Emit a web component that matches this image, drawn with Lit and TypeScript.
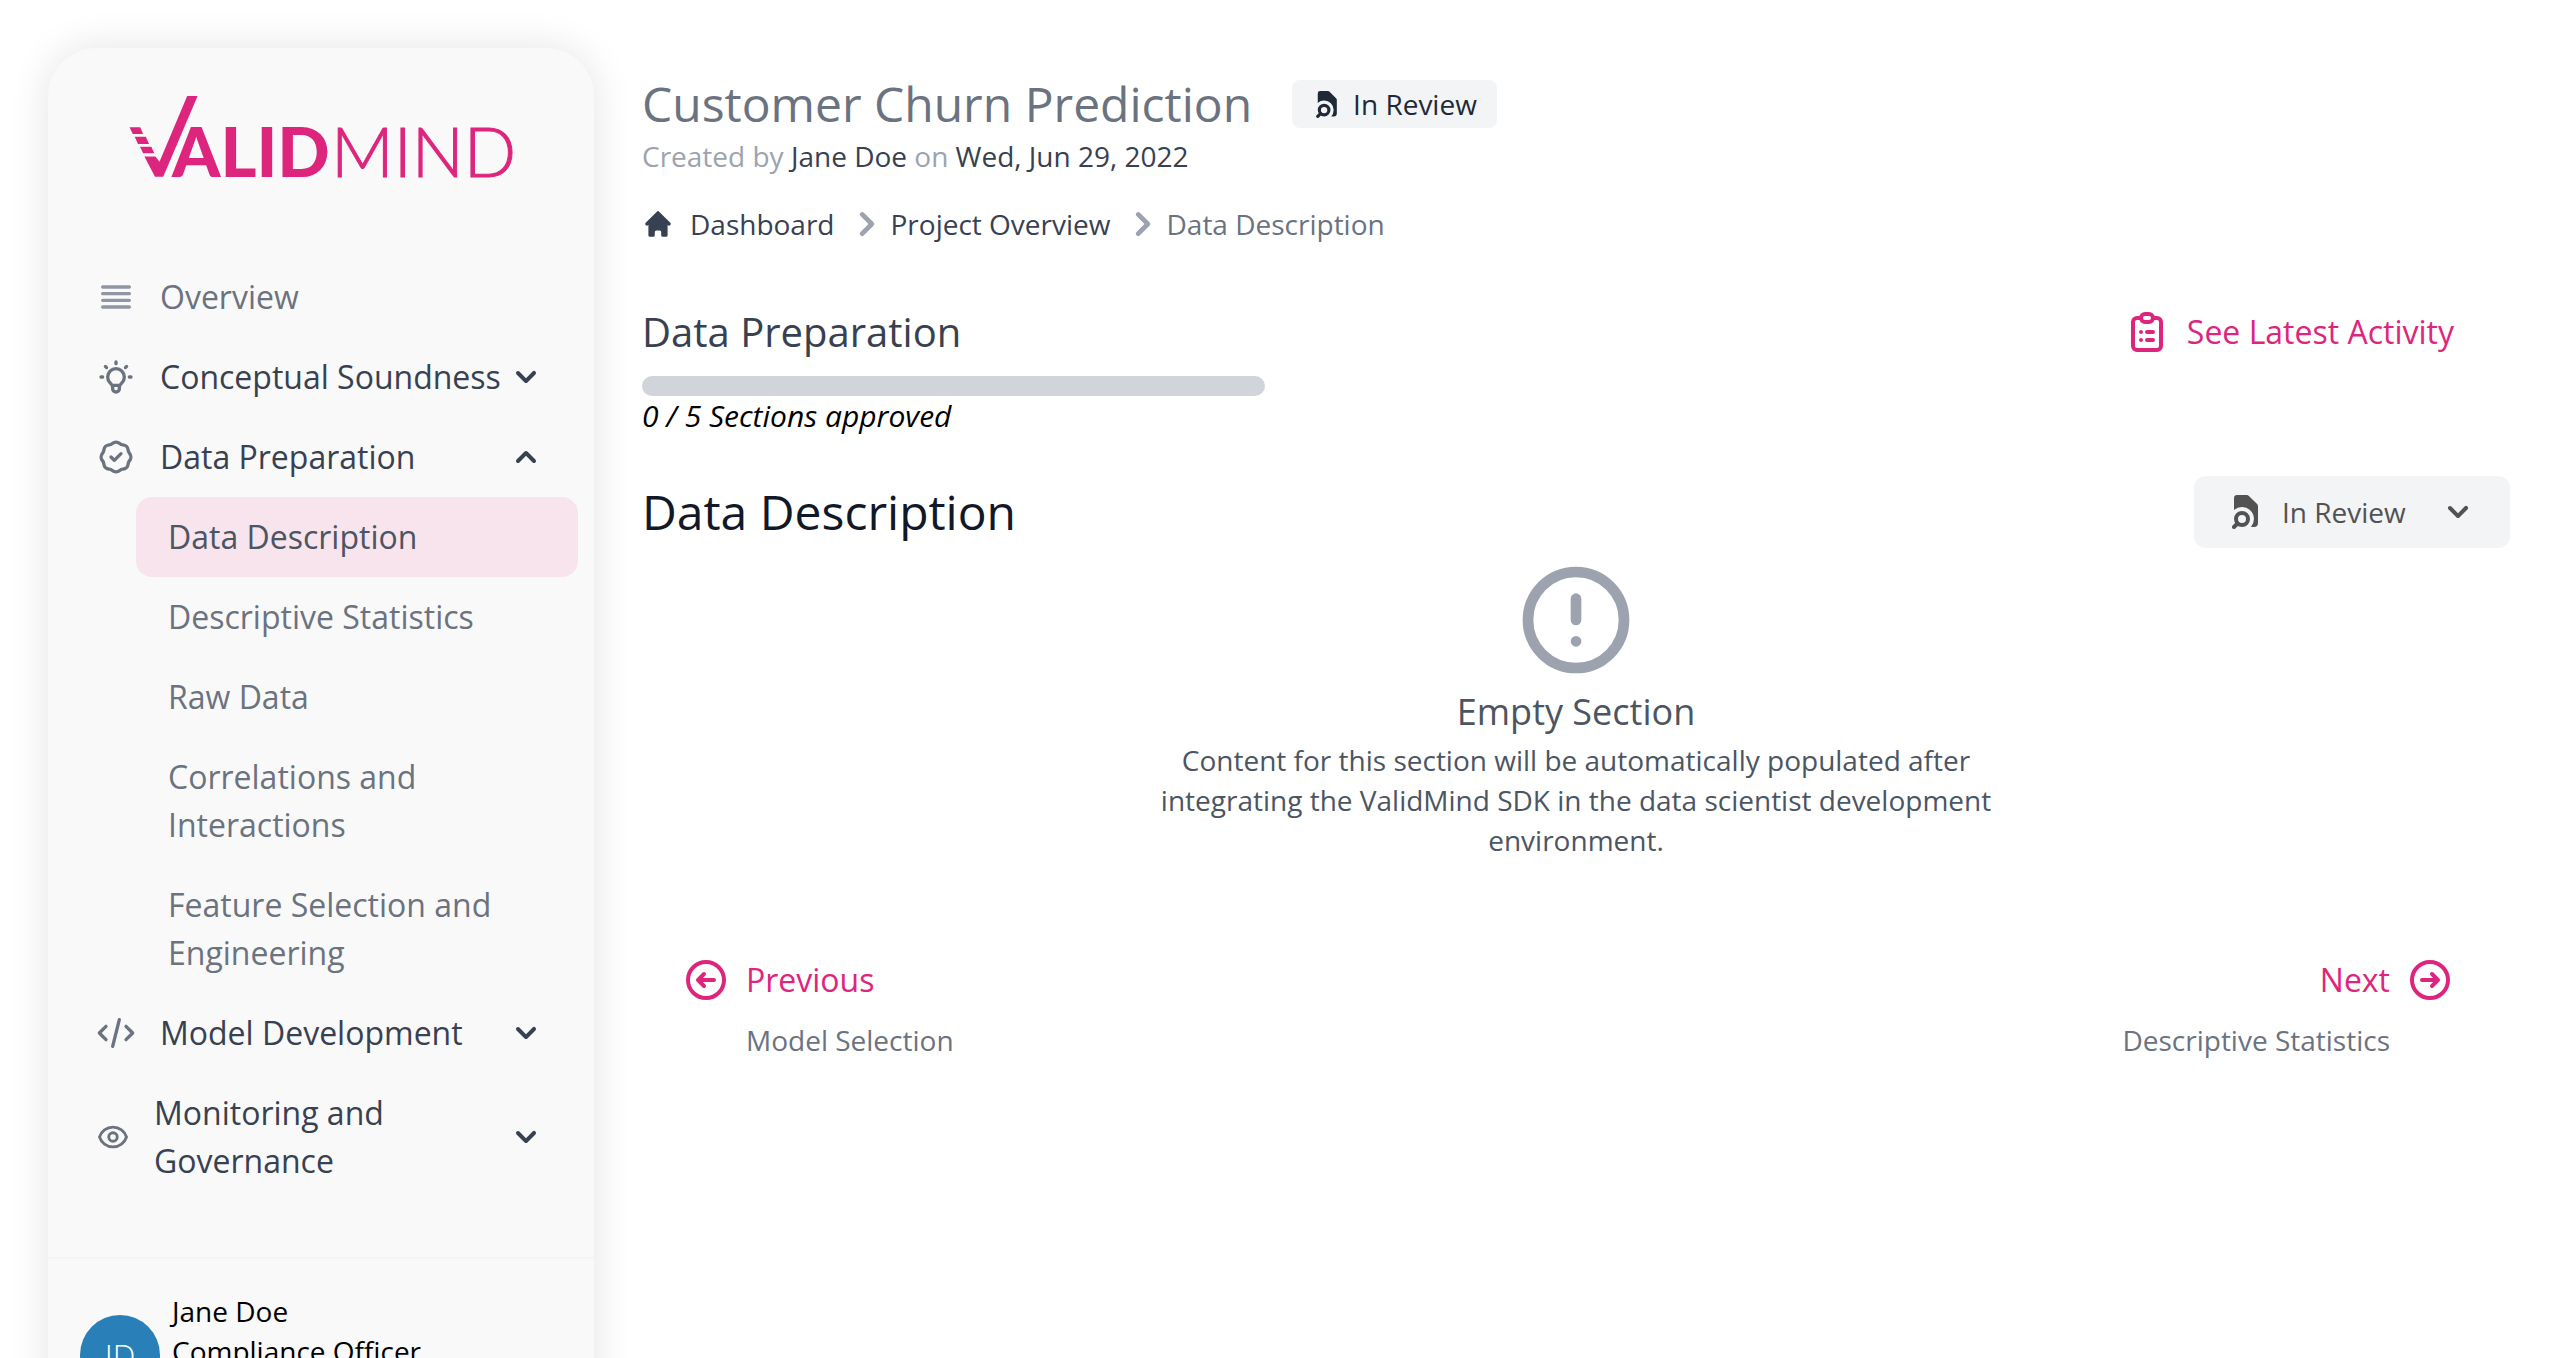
import { LitElement, html, css, svg } from "lit";
import { customElement, property } from "lit/decorators.js";
import { classMap } from "lit/directives/class-map.js";

const CHEVRON_DOWN =
  "M5.293 7.293a1 1 0 011.414 0L10 10.586l3.293-3.293a1 1 0 111.414 1.414l-4 4a1 1 0 01-1.414 0l-4-4a1 1 0 010-1.414z";
const CHEVRON_UP =
  "M14.707 12.707a1 1 0 01-1.414 0L10 9.414l-3.293 3.293a1 1 0 01-1.414-1.414l4-4a1 1 0 011.414 0l4 4a1 1 0 010 1.414z";
const CHEVRON_RIGHT =
  "M7.293 14.707a1 1 0 010-1.414L10.586 10 7.293 6.707a1 1 0 011.414-1.414l4 4a1 1 0 010 1.414l-4 4a1 1 0 01-1.414 0z";
const HOME =
  "M10.707 2.293a1 1 0 00-1.414 0l-7 7a1 1 0 001.414 1.414L4 10.414V17a1 1 0 001 1h2a1 1 0 001-1v-2a1 1 0 011-1h2a1 1 0 011 1v2a1 1 0 001 1h2a1 1 0 001-1v-6.586l.293.293a1 1 0 001.414-1.414l-7-7z";

const OUTLINE: Record<string, string> = {
  list: "M4 6h16M4 10h16M4 14h16M4 18h16",
  bulb: "M9.663 17h4.673M12 3v1m6.364 1.636l-.707.707M21 12h-1M4 12H3m3.343-5.657l-.707-.707m2.828 9.9a5 5 0 117.072 0l-.548.547A3.374 3.374 0 0014 18.469V19a2 2 0 11-4 0v-.531c0-.895-.356-1.754-.988-2.386l-.548-.547z",
  badge:
    "M9 12l2 2 4-4M7.835 4.697a3.42 3.42 0 001.946-.806 3.42 3.42 0 014.438 0 3.42 3.42 0 001.946.806 3.42 3.42 0 013.138 3.138 3.42 3.42 0 00.806 1.946 3.42 3.42 0 010 4.438 3.42 3.42 0 00-.806 1.946 3.42 3.42 0 01-3.138 3.138 3.42 3.42 0 00-1.946.806 3.42 3.42 0 01-4.438 0 3.42 3.42 0 00-1.946-.806 3.42 3.42 0 01-3.138-3.138 3.42 3.42 0 00-.806-1.946 3.42 3.42 0 010-4.438 3.42 3.42 0 00.806-1.946 3.42 3.42 0 013.138-3.138z",
  code: "M10 20l4-16m4 4l4 4-4 4M6 16l-4-4 4-4",
  eye: "M15 12a3 3 0 11-6 0 3 3 0 016 0zM2.458 12C3.732 7.943 7.523 5 12 5c4.478 0 8.268 2.943 9.542 7-1.274 4.057-5.064 7-9.542 7-4.477 0-8.268-2.943-9.542-7z",
  clipboard:
    "M9 5H7a2 2 0 00-2 2v12a2 2 0 002 2h10a2 2 0 002-2V7a2 2 0 00-2-2h-2M9 5a2 2 0 002 2h2a2 2 0 002-2M9 5a2 2 0 012-2h2a2 2 0 012 2m-3 7h3m-3 4h3m-6-4h.01M9 16h.01",
  alert: "M12 8v4m0 4h.01M21 12a9 9 0 11-18 0 9 9 0 0118 0z",
  left: "M11 15l-3-3m0 0l3-3m-3 3h8M3 12a9 9 0 1118 0 9 9 0 01-18 0z",
  right: "M13 9l3 3m0 0l-3 3m3-3H8m13 0a9 9 0 11-18 0 9 9 0 0118 0z",
};

const outline = (name: string, cls: string) => html`
  <svg class=${cls} viewBox="0 0 24 24" fill="none" stroke="currentColor" stroke-width="2"
    stroke-linecap="round" stroke-linejoin="round" aria-hidden="true">
    ${svg`<path d=${OUTLINE[name]}></path>`}
  </svg>`;

const solid = (d: string, cls: string) => html`
  <svg class=${cls} viewBox="0 0 20 20" fill="currentColor" aria-hidden="true">
    ${svg`<path fill-rule="evenodd" clip-rule="evenodd" d=${d}></path>`}
  </svg>`;

const fileSearch = (cls: string) => html`
  <svg class=${cls} viewBox="0 0 26 34" fill="none" aria-hidden="true">
    <path fill="currentColor"
      d="M2 15.06V3a3 3 0 0 1 3-3H14.8a3 3 0 0 1 2.1.9L25.1 9.100a3 3 0 0 1 .9 2.1V28a4 4 0 0 1-4 4H18.940A12 12 0 0 0 2 15.060z"></path>
    <circle cx="10" cy="24" r="6" stroke="currentColor" stroke-width="4"></circle>
    <path d="M5.500 28.500L2 32" stroke="currentColor" stroke-width="4" stroke-linecap="round"></path>
  </svg>`;

interface NavEntry {
  label: string;
  icon: string;
  children?: string[];
  group?: boolean;
}

const NAV: NavEntry[] = [
  { label: "Overview", icon: "list" },
  { label: "Conceptual Soundness", icon: "bulb", group: true },
  {
    label: "Data Preparation",
    icon: "badge",
    group: true,
    children: [
      "Data Description",
      "Descriptive Statistics",
      "Raw Data",
      "Correlations and Interactions",
      "Feature Selection and Engineering",
    ],
  },
  { label: "Model Development", icon: "code", group: true },
  { label: "Monitoring and Governance", icon: "eye", group: true },
];

@customElement("side-bar")
export class SideBar extends LitElement {
  @property() active = "Data Description";

  static styles = css`
    :host {
      display: flex;
      flex-direction: column;
      box-sizing: border-box;
      background: #f9f9f9;
      border-radius: 48px;
      box-shadow: 0 0 40px rgba(0, 0, 0, 0.11);
      font-size: 32px;
      line-height: 48px;
    }
    .brand {
      display: flex;
      justify-content: center;
      padding: 48px 0 80px;
    }
    .logo {
      width: 385px;
      height: 81px;
      overflow: visible;
      color: #de257e;
      fill: currentColor;
      font-family: Lato, "Open Sans", sans-serif;
      font-size: 69px;
    }
    .heavy {
      font-weight: 900;
    }
    .thin {
      font-weight: 300;
      stroke: currentColor;
      stroke-width: 1px;
    }
    ul {
      list-style: none;
      margin: 0;
      padding: 0;
    }
    .nav {
      padding-bottom: 56px;
    }
    .item {
      display: flex;
      align-items: center;
      box-sizing: border-box;
      width: 100%;
      padding: 16px 48px;
      gap: 24px;
      border: 0;
      background: none;
      font: inherit;
      text-align: left;
      text-decoration: none;
      color: #6b7280;
      cursor: pointer;
    }
    .label {
      flex: 1;
    }
    .group .label,
    .chevron {
      color: #374151;
    }
    .icon {
      flex: none;
      width: 40px;
      height: 40px;
      color: #6b7280;
    }
    .icon.light {
      color: #9095a3;
    }
    .icon.small {
      width: 34px;
      height: 34px;
    }
    .chevron {
      flex: none;
      width: 40px;
      height: 40px;
      margin-left: -24px;
    }
    .sub {
      padding: 0 16px 0 88px;
    }
    .link {
      display: block;
      padding: 16px 32px;
      border-radius: 16px;
      color: #6b7280;
      text-decoration: none;
    }
    .link.active {
      background: #f7e4ec;
      color: #4b5563;
    }
    .user {
      display: flex;
      align-items: center;
      gap: 12px;
      padding: 32px;
      border-top: 2px solid #f3f4f6;
      font-size: 28px;
      line-height: 40px;
      color: #000;
    }
    .avatar {
      display: flex;
      align-items: center;
      justify-content: center;
      width: 80px;
      height: 80px;
      border-radius: 50%;
      background: #2980b9;
      color: #fff;
      font-size: 32px;
      font-weight: 300;
    }
    .who {
      min-height: 128px;
    }
  `;

  private renderEntry(entry: NavEntry) {
    const open = !!entry.children;
    const iconClass = entry.icon === "list" ? "icon light" : entry.icon === "eye" ? "icon small" : "icon";
    if (!entry.group) {
      return html`<li>
        <a class="item" href="#overview">${outline(entry.icon, iconClass)}<span class="label">${entry.label}</span></a>
      </li>`;
    }
    return html`<li>
      <button class="item group" type="button" aria-expanded=${open ? "true" : "false"}>
        ${outline(entry.icon, iconClass)}
        <span class="label">${entry.label}</span>
        ${solid(open ? CHEVRON_UP : CHEVRON_DOWN, "chevron")}
      </button>
      ${open
        ? html`<ul class="sub">
            ${entry.children!.map(
              (child) => html`<li>
                <a class=${classMap({ link: true, active: child === this.active })} href="#section">${child}</a>
              </li>`
            )}
          </ul>`
        : null}
    </li>`;
  }

  render() {
    return html`
      <div class="brand">
        <svg class="logo" viewBox="0 0 385 81" role="img" aria-label="ValidMind">
          <path
            d="M58.200 0H68.600L34.200 80.700H26L15.400 60.500H26.400L30.500 65.700ZM.5 31.300H11.200L14.200 38H3.800ZM5.700 40.700H16.800L20.100 48H9ZM10.900 50.700H22.300L25.300 57.300H14.200Z"
          ></path>
          <text class="heavy" x="43" y="81">ALID</text>
          <text class="thin" x="202" y="81">MIND</text>
        </svg>
      </div>
      <nav class="nav" aria-label="Project">
        <ul>
          ${NAV.map((entry) => this.renderEntry(entry))}
        </ul>
      </nav>
      <div class="user">
        <div class="avatar" aria-hidden="true">JD</div>
        <div class="who">
          <div>Jane Doe</div>
          <div>Compliance Officer</div>
        </div>
      </div>
    `;
  }
}

@customElement("app-root")
export class AppRoot extends LitElement {
  static styles = css`
    :host {
      display: grid;
      grid-template-columns: 546px minmax(0, 1fr);
      align-items: start;
      box-sizing: border-box;
      height: 100vh;
      overflow: hidden;
      padding: 48px 48px 0;
      gap: 48px;
      background: #fff;
      font-family: "Open Sans", "Noto Sans", sans-serif;
      font-size: 28px;
      line-height: 40px;
      color: #000;
    }
    h1,
    h2,
    h3,
    p,
    ol {
      margin: 0;
      padding: 0;
      font-weight: 400;
    }
    a {
      color: inherit;
      text-decoration: none;
    }
    main {
      padding-top: 24px;
    }
    .row {
      display: flex;
      align-items: center;
      justify-content: space-between;
    }
    .titlebar {
      display: flex;
      align-items: center;
      gap: 40px;
    }
    h1 {
      font-size: 48px;
      line-height: 64px;
      color: #6b7280;
    }
    .badge {
      display: flex;
      align-items: center;
      gap: 16px;
      height: 48px;
      padding: 0 20px 0 24px;
      border-radius: 8px;
      background: #f3f4f6;
      color: #1f2937;
    }
    .badge-icon {
      width: 21px;
      height: 27px;
    }
    .created {
      color: #9ca3af;
    }
    .strong {
      color: #374151;
    }
    .crumbs {
      display: flex;
      align-items: center;
      list-style: none;
      margin-top: 24px;
      color: #374151;
    }
    .crumbs li {
      display: flex;
      align-items: center;
    }
    .home {
      width: 32px;
      height: 32px;
      margin-right: 16px;
    }
    .sep {
      width: 48px;
      height: 48px;
      margin-left: 8px;
      color: #9ca3af;
    }
    .current {
      color: #6b7280;
    }
    .area {
      margin-top: 56px;
    }
    h2 {
      font-size: 40px;
      line-height: 56px;
      color: #374151;
    }
    .action {
      display: flex;
      align-items: center;
      gap: 16px;
      font-size: 32px;
      line-height: 48px;
      color: #de257e;
    }
    .area .action {
      padding-right: 56px;
    }
    .action-icon {
      width: 48px;
      height: 48px;
    }
    .bar {
      width: calc(100% / 3);
      height: 20px;
      margin-top: 16px;
      border-radius: 10px;
      background: #d1d5db;
    }
    .approved {
      font-size: 30px;
      font-style: italic;
    }
    .section {
      margin-top: 40px;
    }
    h3.heading {
      font-size: 48px;
      line-height: 64px;
      color: #111827;
    }
    .status {
      display: flex;
      align-items: center;
      height: 72px;
      padding: 0 32px 0 38px;
      border-radius: 12px;
      background: #f3f4f6;
      color: #525252;
    }
    .status-icon {
      width: 26px;
      height: 34px;
      margin-right: 24px;
    }
    .status select {
      appearance: none;
      border: 0;
      margin: 0;
      padding: 0;
      background: none;
      font: inherit;
      color: inherit;
    }
    .status-chevron {
      width: 40px;
      height: 40px;
      margin-left: 32px;
      pointer-events: none;
    }
    .empty {
      display: flex;
      flex-direction: column;
      align-items: center;
      margin-top: 8px;
      color: #4b5563;
      text-align: center;
    }
    .empty-icon {
      width: 128px;
      height: 128px;
      color: #9ca3af;
    }
    h3.empty-title {
      font-size: 36px;
      line-height: 56px;
    }
    .empty p {
      max-width: 896px;
    }
    .pager {
      display: flex;
      justify-content: space-between;
      margin-top: 96px;
      padding: 0 56px 0 40px;
    }
    .page {
      display: grid;
      row-gap: 16px;
    }
    .page-name {
      color: #6b7280;
    }
    .prev .page-name {
      padding-left: 64px;
    }
    .next {
      justify-items: end;
    }
    .next .page-name {
      padding-right: 64px;
    }
  `;

  render() {
    return html`
      <side-bar active="Data Description"></side-bar>
      <main>
        <header>
          <div class="titlebar">
            <h1>Customer Churn Prediction</h1>
            <span class="badge">${fileSearch("badge-icon")}<span>In Review</span></span>
          </div>
          <p class="created">
            Created by <span class="strong">Jane Doe</span> on <span class="strong">Wed, Jun 29, 2022</span>
          </p>
          <nav aria-label="Breadcrumb">
            <ol class="crumbs">
              <li>${solid(HOME, "home")}<a href="#dashboard">Dashboard</a></li>
              <li>${solid(CHEVRON_RIGHT, "sep")}<a href="#overview">Project Overview</a></li>
              <li>${solid(CHEVRON_RIGHT, "sep")}<span class="current" aria-current="page">Data Description</span></li>
            </ol>
          </nav>
        </header>
        <section class="area">
          <div class="row">
            <h2>Data Preparation</h2>
            <a class="action" href="#activity">${outline("clipboard", "action-icon")}<span>See Latest Activity</span></a>
          </div>
          <div class="bar" role="progressbar" aria-label="Sections approved" aria-valuemin="0" aria-valuemax="5" aria-valuenow="0"></div>
          <p class="approved">0 / 5 Sections approved</p>
        </section>
        <section class="section">
          <div class="row">
            <h3 class="heading">Data Description</h3>
            <div class="status">
              ${fileSearch("status-icon")}
              <select aria-label="Section status">
                <option selected>In Review</option>
              </select>
              ${solid(CHEVRON_DOWN, "status-chevron")}
            </div>
          </div>
          <div class="empty">
            ${outline("alert", "empty-icon")}
            <h3 class="empty-title">Empty Section</h3>
            <p>
              Content for this section will be automatically populated after integrating the ValidMind SDK in the data
              scientist development environment.
            </p>
          </div>
        </section>
        <nav class="pager" aria-label="Sections">
          <a class="page prev" href="#previous">
            <span class="action">${outline("left", "action-icon")}<span>Previous</span></span>
            <span class="page-name">Model Selection</span>
          </a>
          <a class="page next" href="#next">
            <span class="action"><span>Next</span>${outline("right", "action-icon")}</span>
            <span class="page-name">Descriptive Statistics</span>
          </a>
        </nav>
      </main>
    `;
  }
}
